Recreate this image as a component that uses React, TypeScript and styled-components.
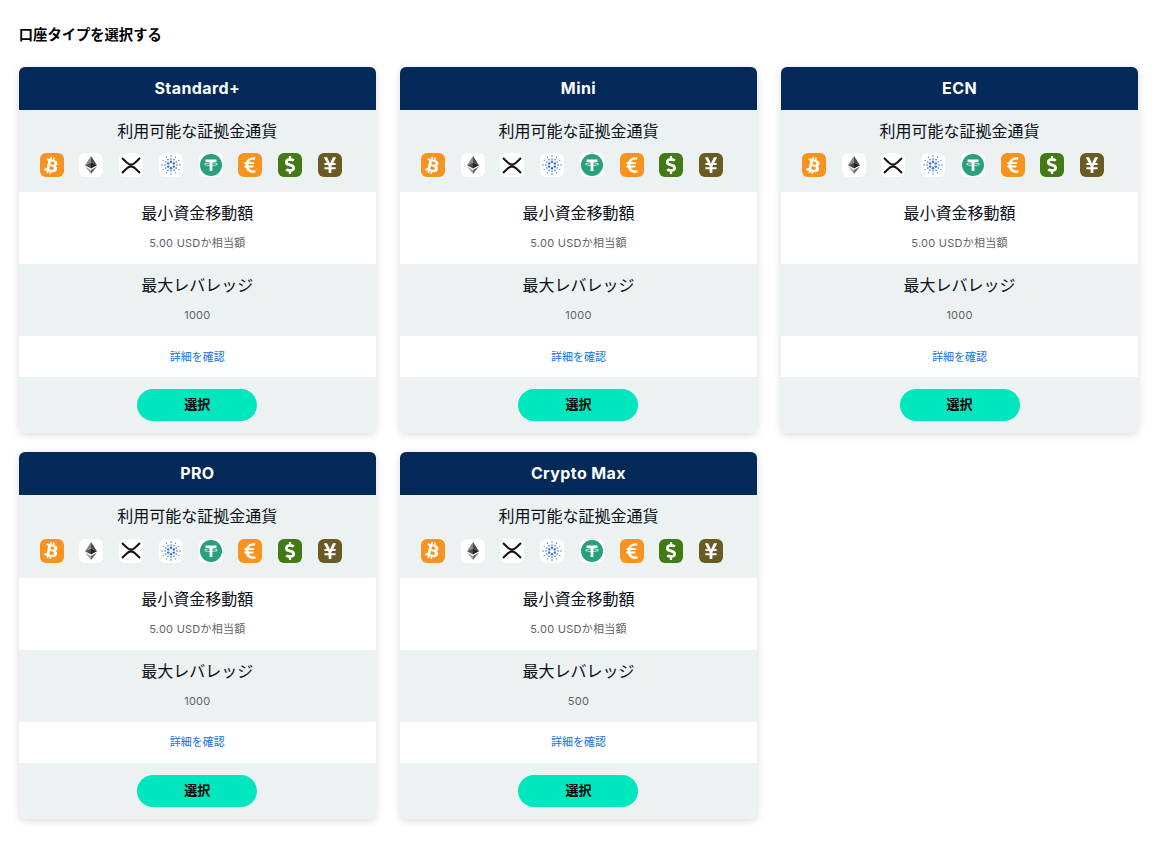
import React from "react";
import styled, { createGlobalStyle } from "styled-components";
import { FaBtc, FaDollarSign, FaEuroSign, FaYenSign } from "react-icons/fa";

const colors = {
    navy: "#032958",
    pale: "#ecf1f1",
    mint: "#00e6bf",
    ink: "#0a1018",
    grey: "#5f6368",
    link: "#1573e6",
    orange: "#f7931e",
    green: "#447a16",
    brown: "#6b5a24",
    teal: "#26a17b",
};

const GlobalStyle = createGlobalStyle`
    html, body {
        margin: 0;
        background: #fff;
    }
    body {
        font-family: Inter, "Noto Sans CJK JP", sans-serif;
        color: ${colors.ink};
    }
`;

const Page = styled.div`
    padding: 27px 0 24px 18.8px;
    width: 1120px;
`;

const Title = styled.h2`
    margin: 0 0 23.9px;
    font-size: 14.3px;
    line-height: 16px;
    font-weight: 700;
    color: #000;
`;

const Grid = styled.div`
    display: grid;
    grid-template-columns: repeat(3, 357.1px);
    column-gap: 24px;
    row-gap: 19px;
`;

const Card = styled.div`
    border-radius: 6px;
    overflow: hidden;
    background: ${colors.pale};
    box-shadow: 0 2px 8px rgba(0, 0, 0, 0.14);
`;

const CardHead = styled.div`
    height: 43px;
    padding-bottom: 1px;
    box-sizing: border-box;
    display: flex;
    align-items: center;
    justify-content: center;
    background: ${colors.navy};
    color: #fff;
    font-size: 16px;
    font-weight: 700;
    letter-spacing: 0.4px;
`;

const Section = styled.div<{ $white?: boolean; $height: number }>`
    height: ${({ $height }) => $height}px;
    box-sizing: border-box;
    padding-top: 10px;
    background: ${({ $white }) => ($white ? "#fff" : colors.pale)};
    text-align: center;
`;

const SectionTitle = styled.div`
    font-size: 16px;
    line-height: 22px;
    font-weight: 400;
`;

const SectionValue = styled.div`
    margin-top: 11px;
    font-size: 11px;
    line-height: 16px;
    letter-spacing: 0.25px;
    color: ${colors.grey};
`;

const IconRow = styled.div`
    display: flex;
    gap: 15.75px;
    margin-top: 11.4px;
    padding-left: 20.9px;
`;

const IconBox = styled.span<{ $bg: string }>`
    width: 24px;
    height: 24px;
    flex: none;
    display: flex;
    align-items: center;
    justify-content: center;
    border-radius: 6px;
    background: ${({ $bg }) => $bg};
    color: #fff;
`;

const TiltedIcon = styled(FaBtc)`
    transform: rotate(14deg);
`;

const LinkRow = styled.div`
    height: 41px;
    padding-bottom: 2px;
    box-sizing: border-box;
    display: flex;
    align-items: center;
    justify-content: center;
    background: #fff;
`;

const DetailLink = styled.a`
    font-size: 11px;
    color: ${colors.link};
    text-decoration: none;
`;

const Footer = styled.div`
    height: 56px;
    display: flex;
    justify-content: center;
    padding-top: 12px;
    box-sizing: border-box;
`;

const SelectButton = styled.button`
    width: 120px;
    height: 32px;
    padding: 0 0 3px;
    border: 0;
    border-radius: 16px;
    background: ${colors.mint};
    color: #000;
    font-family: inherit;
    font-size: 13px;
    font-weight: 700;
`;

const EthIcon = () => (
    <svg width="12" height="18" viewBox="0 0 12 18">
        <path d="M6 0 L0 9.2 L6 6.5 Z" fill="#8a8a8a" />
        <path d="M6 0 L12 9.2 L6 6.5 Z" fill="#4a4a4a" />
        <path d="M0 9.2 L6 12.6 L6 6.5 Z" fill="#4f4f4f" />
        <path d="M12 9.2 L6 12.6 L6 6.5 Z" fill="#222" />
        <path d="M0 10.4 L6 18 L6 13.9 Z" fill="#a5a5a5" />
        <path d="M12 10.4 L6 18 L6 13.9 Z" fill="#666" />
    </svg>
);

const XrpIcon = () => (
    <svg width="20" height="17" viewBox="0 0 20 17" fill="none" stroke="#111" strokeWidth="2">
        <path d="M1 1 L6 5.8 C8.4 8 11.6 8 14 5.8 L19 1" />
        <path d="M1 16 L6 11.2 C8.4 9 11.6 9 14 11.2 L19 16" />
    </svg>
);

const adaDots = [
    [10, 1, 0.7], [5.5, 2.2, 0.6], [14.5, 2.2, 0.6], [2.2, 5.5, 0.6], [17.8, 5.5, 0.6],
    [1, 10, 0.7], [19, 10, 0.7], [2.2, 14.5, 0.6], [17.8, 14.5, 0.6], [5.5, 17.8, 0.6],
    [14.5, 17.8, 0.6], [10, 19, 0.7], [10, 4, 0.8], [7, 4.8, 0.8], [13, 4.8, 0.8],
    [4.8, 7, 0.8], [15.2, 7, 0.8], [4, 10, 0.8], [16, 10, 0.8], [4.8, 13, 0.8],
    [15.2, 13, 0.8], [7, 15.2, 0.8], [13, 15.2, 0.8], [10, 16, 0.8], [10, 6.8, 1.2],
    [7.2, 8.4, 1.2], [12.8, 8.4, 1.2], [7.2, 11.6, 1.2], [12.8, 11.6, 1.2], [10, 13.2, 1.2],
];

const AdaIcon = () => (
    <svg width="20" height="20" viewBox="0 0 20 20" fill="#2a6fdb">
        {adaDots.map(([cx, cy, r]) => (
            <circle key={`${cx}-${cy}`} cx={cx} cy={cy} r={r} />
        ))}
    </svg>
);

const TetherIcon = () => (
    <svg width="22" height="22" viewBox="0 0 22 22">
        <circle cx="11" cy="11" r="11" fill={colors.teal} />
        <path d="M5.5 5.5 H16.5 V8 H12.4 V17 H9.6 V8 H5.5 Z" fill="#fff" />
        <ellipse cx="11" cy="10.2" rx="6.6" ry="1.3" fill="none" stroke="#fff" strokeWidth="0.7" />
    </svg>
);

const CurrencyIcons = () => (
    <IconRow>
        <IconBox $bg={colors.orange}><TiltedIcon size={17} /></IconBox>
        <IconBox $bg="#fff"><EthIcon /></IconBox>
        <IconBox $bg="#fff"><XrpIcon /></IconBox>
        <IconBox $bg="#fff"><AdaIcon /></IconBox>
        <IconBox $bg="#fff"><TetherIcon /></IconBox>
        <IconBox $bg={colors.orange}><FaEuroSign size={18} /></IconBox>
        <IconBox $bg={colors.green}><FaDollarSign size={18} /></IconBox>
        <IconBox $bg={colors.brown}><FaYenSign size={18} /></IconBox>
    </IconRow>
);

const accounts = [
    { name: "Standard+", leverage: "1000" },
    { name: "Mini", leverage: "1000" },
    { name: "ECN", leverage: "1000" },
    { name: "PRO", leverage: "1000" },
    { name: "Crypto Max", leverage: "500" },
];

const App = () => (
    <Page>
        <GlobalStyle />
        <Title>口座タイプを選択する</Title>
        <Grid>
            {accounts.map((account) => (
                <Card key={account.name}>
                    <CardHead>{account.name}</CardHead>
                    <Section $height={82.5}>
                        <SectionTitle>利用可能な証拠金通貨</SectionTitle>
                        <CurrencyIcons />
                    </Section>
                    <Section $white $height={72}>
                        <SectionTitle>最小資金移動額</SectionTitle>
                        <SectionValue>5.00 USDか相当額</SectionValue>
                    </Section>
                    <Section $height={72}>
                        <SectionTitle>最大レバレッジ</SectionTitle>
                        <SectionValue>{account.leverage}</SectionValue>
                    </Section>
                    <LinkRow>
                        <DetailLink href="#">詳細を確認</DetailLink>
                    </LinkRow>
                    <Footer>
                        <SelectButton>選択</SelectButton>
                    </Footer>
                </Card>
            ))}
        </Grid>
    </Page>
);

export default App;
